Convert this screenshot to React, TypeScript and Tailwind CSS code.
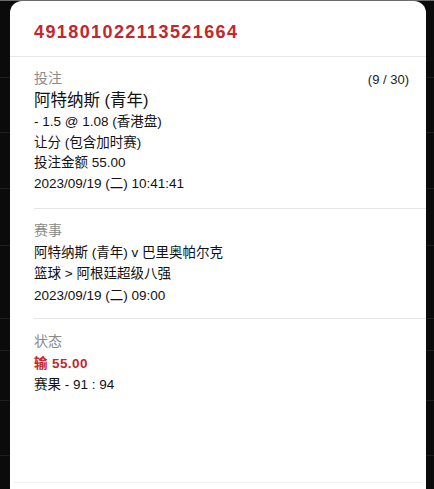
import React from "react";

const FONT = { fontFamily: '"Liberation Sans", "Noto Sans CJK SC", sans-serif' };

const bgRows = [77, 55, 56, 57, 73, 32, 50, 55];

function Backdrop() {
  return (
    <div className="flex h-full w-full flex-col">
      <div className="h-px w-full bg-[#6b6b6b]" />
      {bgRows.map((h, i) => (
        <div key={i} className="w-full border-b border-[#1f1f1f]" style={{ height: h }} />
      ))}
    </div>
  );
}

function Divider() {
  return <div className="ml-6 h-px bg-[#e6e6e6]" />;
}

export default function App() {
  return (
    <div className="relative h-[489px] w-[434px] overflow-hidden bg-[#0b0b0b]" style={FONT}>
      <Backdrop />
      <div className="absolute top-px bottom-0 left-[10px] right-[8px] flex flex-col rounded-t-[12px] bg-white">
        <div className="border-b border-[#e8e8e8] pl-6 pt-[19px] pb-[12px]">
          <div className="text-[18px] font-bold leading-[24px] tracking-[1.4px] text-[#c4262c]">
            491801022113521664
          </div>
        </div>

        <section className="pl-6 pr-[17px] pt-[11px] pb-[14px] text-[13.5px] leading-[20.5px] text-[#111]">
          <div className="flex items-end justify-between">
            <span className="text-[14px] leading-[21px] text-[#8a8a8a]">投注</span>
            <span className="text-[13px] leading-[19px] text-[#222]">(9 / 30)</span>
          </div>
          <div className="text-[16.5px] leading-[23px]">阿特纳斯 (青年)</div>
          <div>- 1.5 @ 1.08 (香港盘)</div>
          <div>让分 (包含加时赛)</div>
          <div>投注金额 55.00</div>
          <div>2023/09/19 (二) 10:41:41</div>
        </section>
        <Divider />

        <section className="pl-6 pr-[17px] pt-[11px] pb-[12px] text-[13.5px] leading-[21.5px] text-[#111]">
          <div className="text-[14px] text-[#8a8a8a]">赛事</div>
          <div>阿特纳斯 (青年) v 巴里奥帕尔克</div>
          <div>篮球 &gt; 阿根廷超级八强</div>
          <div>2023/09/19 (二) 09:00</div>
        </section>
        <Divider />

        <section className="flex-1 pl-6 pr-[17px] pt-[12px] text-[13.5px] leading-[21.5px] text-[#111]">
          <div className="text-[14px] text-[#8a8a8a]">状态</div>
          <div className="font-bold tracking-[0.4px] text-[#c4262c]">输 55.00</div>
          <div>赛果 - 91 : 94</div>
        </section>
        <div className="mx-1 mb-[6px] h-px bg-[#f1f1f1]" />
      </div>
    </div>
  );
}
